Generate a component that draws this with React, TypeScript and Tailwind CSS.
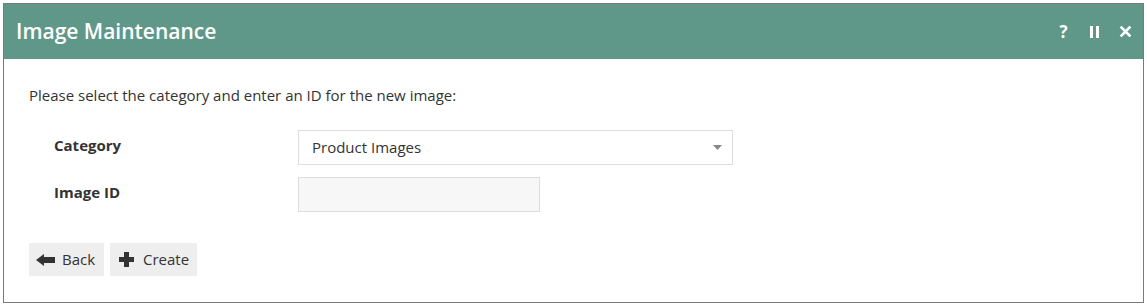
import React from "react";

export default function App() {
  return (
    <div className="p-[3px] bg-white" style={{ fontFamily: '"Open Sans", "Noto Sans", sans-serif' }}>
      <div className="border border-[#7a7a7a] w-[1141px] h-[300px] flex flex-col">
        <div className="h-[55px] bg-[#5f9888] flex items-center justify-between pl-[12px] pr-[11px]">
          <div className="text-white text-[21px] font-semibold leading-none">Image Maintenance</div>
          <div className="flex items-center gap-[18px] text-white">
            <span className="text-[17px] font-bold leading-none w-[13px] text-center">?</span>
            <span className="flex gap-[3px] w-[13px] justify-center">
              <span className="w-[3px] h-[12px] bg-white" />
              <span className="w-[3px] h-[12px] bg-white" />
            </span>
            <svg width="13" height="13" viewBox="0 0 12 12">
              <path d="M1.5 1.5 L10.5 10.5 M10.5 1.5 L1.5 10.5" stroke="white" strokeWidth="2.6" strokeLinecap="butt" />
            </svg>
          </div>
        </div>
        <div className="flex-1 pt-[26px] px-[25px] text-[#333333]">
          <div className="text-[15px] leading-[21px]">Please select the category and enter an ID for the new image:</div>
          <div className="mt-[24px] pl-[25px] flex flex-col gap-[12px]">
            <div className="flex items-center">
              <div className="w-[244px] text-[15px] font-bold -mt-[4px]">Category</div>
              <div className="w-[435px] h-[35px] border border-[#dddddd] bg-white flex items-center justify-between pl-[13px] pr-[10px] text-[15px]">
                <span>Product Images</span>
                <svg width="9" height="5" viewBox="0 0 9 5"><path d="M0 0 L9 0 L4.5 5 Z" fill="#888888" /></svg>
              </div>
            </div>
            <div className="flex items-center">
              <div className="w-[244px] text-[15px] font-bold -mt-[4px]">Image ID</div>
              <div className="w-[242px] h-[35px] border border-[#dddddd] bg-[#f7f7f7]" />
            </div>
          </div>
          <div className="mt-[31px] flex gap-[6px]">
            <button className="h-[33px] w-[75px] bg-[#eeeeee] flex items-center pl-[7px] gap-[7px] text-[15px] text-[#333333]">
              <svg width="19" height="12" viewBox="0 0 19 12">
                <path d="M0 6 L8 0 L8 3 L19 3 L19 9 L8 9 L8 12 Z" fill="#333333" />
              </svg>
              <span>Back</span>
            </button>
            <button className="h-[33px] w-[87px] bg-[#eeeeee] flex items-center pl-[9px] gap-[9px] text-[15px] text-[#333333]">
              <svg width="15" height="15" viewBox="0 0 15 15">
                <path d="M5 0 H10 V5 H15 V10 H10 V15 H5 V10 H0 V5 H5 Z" fill="#333333" />
              </svg>
              <span>Create</span>
            </button>
          </div>
        </div>
      </div>
    </div>
  );
}
